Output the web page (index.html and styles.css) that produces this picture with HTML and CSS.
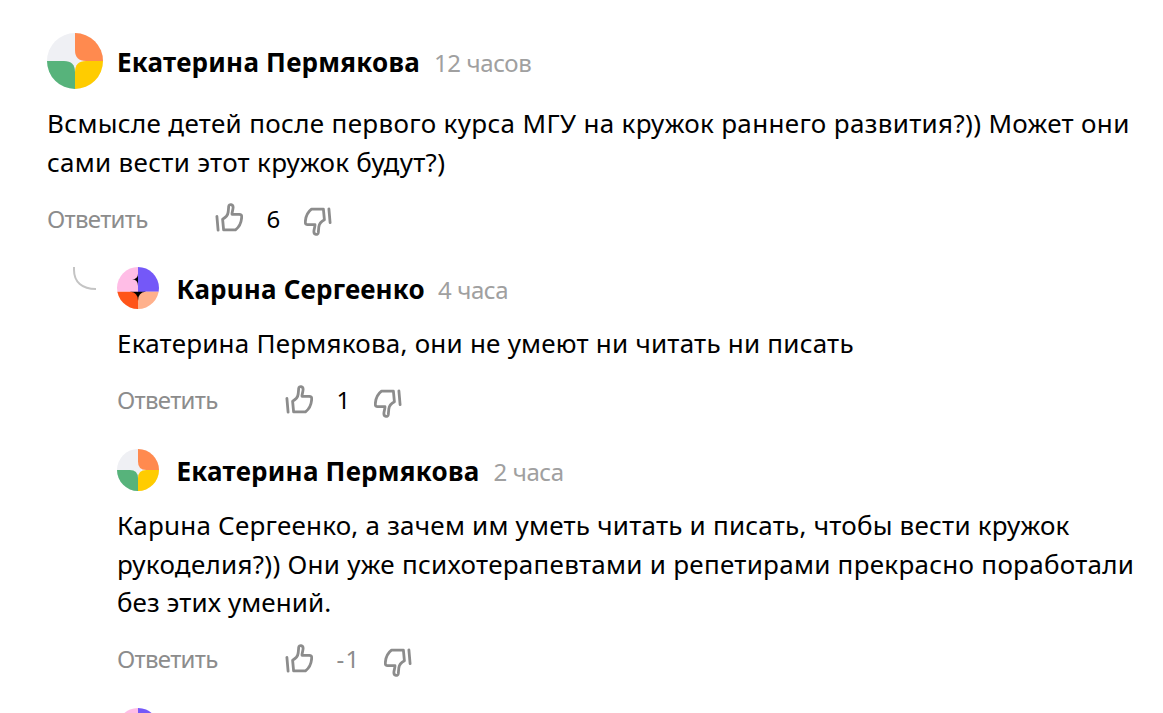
FILE: index.html
```html
<!DOCTYPE html>
<html lang="ru">
<head>
    <meta charset="UTF-8">
    <meta name="viewport" content="width=device-width, initial-scale=1.0">
    <title>Комментарии</title>
    <link rel="stylesheet" href="styles.css">
</head>
<body>
    <svg class="sprite" width="0" height="0">
        <defs>
            <clipPath id="circle"><circle cx="28" cy="28" r="28"/></clipPath>
        </defs>
        <symbol id="avatar-kate" viewBox="0 0 56 56">
            <g clip-path="url(#circle)">
                <rect width="56" height="56" fill="#eff0f4"/>
                <path d="M28 0H56V28H39Q28 28 28 17Z" fill="#ff8a4f"/>
                <path d="M0 28H17Q28 28 28 39V56H0Z" fill="#57b37b"/>
                <path d="M56 28V56H28V39Q28 28 39 28Z" fill="#ffcc00"/>
            </g>
        </symbol>
        <symbol id="avatar-karina" viewBox="0 0 56 56">
            <g clip-path="url(#circle)">
                <path d="M18 8H38V46H18Z" fill="#000"/>
                <path d="M0 0H28V9Q28 16 20 16.500H0Z" fill="#ffbde6"/>
                <path d="M0 16H20Q28 17 28 25V33H0Z" fill="#ffbde6"/>
                <path d="M28 0H56V33H28Z" fill="#7458f8"/>
                <path d="M0 33H18Q28 34 28 45V56H0Z" fill="#ff5419"/>
                <path d="M56 33V56H28V45Q28 34 38 33Z" fill="#ffb18c"/>
            </g>
        </symbol>
        <symbol id="thumb" viewBox="0 0 28 32">
            <path d="M1.900 14.300L3.100 28.200M7.600 17.200Q12.700 14.500 13.200 10L13.700 4.300C14 1.700 18.300 2 18.100 5.500C18 8 17 10 17 12.300H24.300Q26.800 12.300 26.700 15C26.400 20.300 25 24.500 20.500 27.800H8.600Z" fill="none" stroke="#8c8c8c" stroke-width="2.800" stroke-linejoin="round" stroke-linecap="round"/>
        </symbol>
    </svg>

    <main class="comments">
        <article class="comment root">
            <header class="comment-header">
                <svg class="avatar"><use href="#avatar-kate"/></svg>
                <span class="author kate">Екатерина Пермякова</span>
                <time class="time">12 часов</time>
            </header>
            <p class="comment-text">
                <span class="line l1">Всмысле детей после первого курса МГУ на кружок раннего развития?)) Может они</span>
                <span class="line l2">сами вести этот кружок будут?)</span>
            </p>
            <footer class="actions">
                <button class="reply">Ответить</button>
                <button class="vote"><svg><use href="#thumb"/></svg></button>
                <span class="score">6</span>
                <button class="vote down"><svg><use href="#thumb"/></svg></button>
            </footer>
        </article>

        <section class="replies">
            <svg class="branch" viewBox="0 0 23 24"><path d="M1 0V3C1 15 9 22 23 22" fill="none" stroke="#c4c4c4" stroke-width="2"/></svg>
            <article class="comment">
                <header class="comment-header">
                    <svg class="avatar"><use href="#avatar-karina"/></svg>
                    <span class="author karina">Карuна Сергеенко</span>
                    <time class="time">4 часа</time>
                </header>
                <p class="comment-text">
                    <span class="line l3">Екатерина Пермякова, они не умеют ни читать ни писать</span>
                </p>
                <footer class="actions">
                    <button class="reply">Ответить</button>
                    <button class="vote"><svg><use href="#thumb"/></svg></button>
                    <span class="score">1</span>
                    <button class="vote down"><svg><use href="#thumb"/></svg></button>
                </footer>
            </article>

            <article class="comment">
                <header class="comment-header">
                    <svg class="avatar"><use href="#avatar-kate"/></svg>
                    <span class="author kate">Екатерина Пермякова</span>
                    <time class="time">2 часа</time>
                </header>
                <p class="comment-text">
                    <span class="line l4">Карuна Сергеенко, а зачем им уметь читать и писать, чтобы вести кружок</span>
                    <span class="line l5">рукоделия?)) Они уже психотерапевтами и репетирами прекрасно поработали</span>
                    <span class="line l6">без этих умений.</span>
                </p>
                <footer class="actions">
                    <button class="reply">Ответить</button>
                    <button class="vote"><svg><use href="#thumb"/></svg></button>
                    <span class="score negative">-1</span>
                    <button class="vote down"><svg><use href="#thumb"/></svg></button>
                </footer>
            </article>

            <article class="comment">
                <header class="comment-header">
                    <svg class="avatar"><use href="#avatar-karina"/></svg>
                </header>
            </article>
        </section>
    </main>
</body>
</html>
```
FILE: styles.css
```css
* {
    margin: 0;
    padding: 0;
    box-sizing: border-box;
}

body {
    font-family: 'Segoe UI', 'Noto Sans', sans-serif;
    font-size: 26px;
    background-color: #fff;
    color: #000;
    height: 100vh;
    overflow: hidden;
}

.sprite {
    position: absolute;
}

.comments {
    height: 100vh;
    overflow: hidden;
    padding: 33px 0 0 47px;
}

.comment-header {
    display: flex;
    align-items: center;
    height: 42px;
    white-space: nowrap;
}

.root .comment-header {
    height: 56px;
}

.avatar {
    width: 42px;
    height: 42px;
    margin-right: 17.500px;
    flex-shrink: 0;
}

.root .avatar {
    width: 56px;
    height: 56px;
    margin-right: 14px;
}

.author {
    font-weight: 700;
    line-height: 36px;
    padding-top: 1px;
}

.kate {
    width: 317px;
    letter-spacing: 0.24px;
}

.karina {
    width: 261.500px;
    letter-spacing: 0.17px;
}

.time {
    font-size: 24px;
    line-height: 36px;
    letter-spacing: -0.4px;
    padding-top: 3px;
    color: #a0a0a0;
}

.comment-text {
    line-height: 38.500px;
    margin-top: 15px;
}

.line {
    display: block;
    white-space: nowrap;
}

.l1 { letter-spacing: 0.335px; }
.l2 { letter-spacing: 0.29px; }
.l3 { letter-spacing: 0.225px; }
.l4 { letter-spacing: 0.225px; }
.l5 { letter-spacing: 0.28px; }
.l6 { letter-spacing: 0.08px; }

.actions {
    display: flex;
    align-items: center;
    height: 38px;
    margin-top: 19px;
}

.actions button {
    border: none;
    background: none;
    font: inherit;
    cursor: pointer;
}

.actions .reply {
    width: 167.500px;
    padding-bottom: 2px;
    font-size: 24px;
    letter-spacing: -0.7px;
    color: #8c8c8c;
    text-align: left;
}

.vote,
.vote svg {
    display: block;
    width: 28px;
    height: 32px;
}

.vote {
    margin-bottom: 2px;
}

.actions .vote.down {
    margin-top: 4px;
    margin-bottom: 0;
    transform: rotate(180deg);
}

.score {
    margin: 0 23.500px 0 24px;
    padding-bottom: 2px;
    font-size: 24px;
}

.score.negative {
    letter-spacing: 1.3px;
    color: #8c8c8c;
}

.replies {
    position: relative;
    margin-left: 70px;
    padding-top: 29px;
}

.replies .comment {
    margin-bottom: 29.500px;
}

/* curved connector from the parent comment */
.branch {
    position: absolute;
    left: -44px;
    top: 29px;
    width: 23px;
    height: 24px;
}
```
